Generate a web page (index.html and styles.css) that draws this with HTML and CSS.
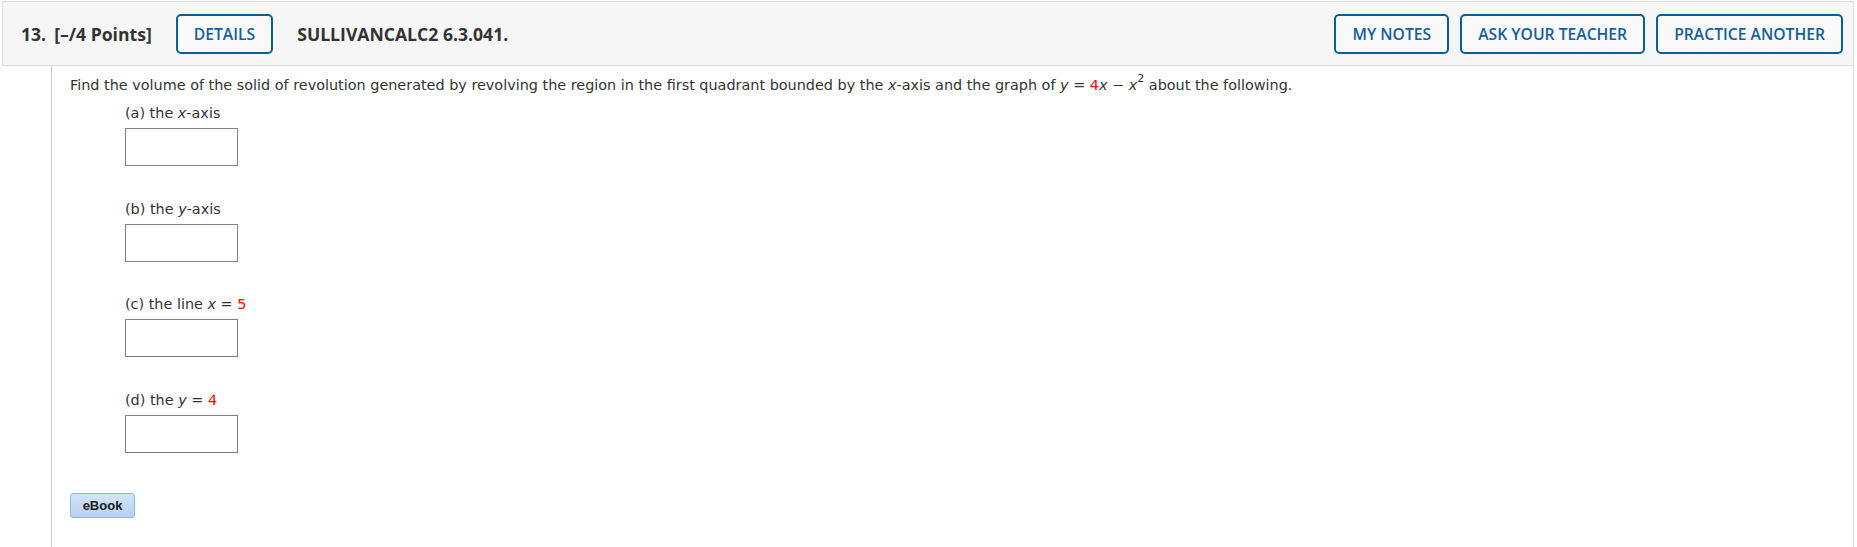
FILE: index.html
```html
<!DOCTYPE html>
<html lang="en">
<head>
<meta charset="utf-8">
<title>Question 13</title>
<link rel="stylesheet" href="styles.css">
</head>
<body>
<div class="page">
  <div class="q-header">
    <div class="q-left">
      <span class="q-num">13.</span>
      <span class="q-points">[–/4 Points]</span>
      <button class="btn">DETAILS</button>
      <span class="q-code">SULLIVANCALC2 6.3.041.</span>
    </div>
    <div class="q-right">
      <button class="btn">MY NOTES</button>
      <button class="btn">ASK YOUR TEACHER</button>
      <button class="btn">PRACTICE ANOTHER</button>
    </div>
  </div>
  <div class="q-body">
    <p class="q-text">Find the volume of the solid of revolution generated by revolving the region in the first quadrant bounded by the <i>x</i>-axis and the graph of <i>y</i> = <span class="red">4</span><i>x</i> − <i>x</i><sup>2</sup> about the following.</p>
    <div class="part">
      <div class="part-label">(a) the <i>x</i>-axis</div>
      <div class="answer"></div>
    </div>
    <div class="part">
      <div class="part-label">(b) the <i>y</i>-axis</div>
      <div class="answer"></div>
    </div>
    <div class="part">
      <div class="part-label">(c) the line <i>x</i> = <span class="red">5</span></div>
      <div class="answer"></div>
    </div>
    <div class="part">
      <div class="part-label">(d) the <i>y</i> = <span class="red">4</span></div>
      <div class="answer"></div>
    </div>
    <button class="ebook">eBook</button>
  </div>
</div>
</body>
</html>
```
FILE: styles.css
```css
html, body {
  margin: 0;
  padding: 0;
  background: #ffffff;
}
.page {
  padding: 1px 3px 0 2px;
}
.q-header {
  height: 63px;
  border: 1px solid #dcdcdc;
  background: #f6f6f6;
  display: flex;
  align-items: center;
  justify-content: space-between;
  padding: 0 10px 0 18px;
  font-family: "Open Sans", "Liberation Sans", sans-serif;
  color: #333333;
}
.q-left, .q-right {
  display: flex;
  align-items: center;
}
.q-num, .q-points, .q-code {
  font-weight: 700;
  font-size: 17.6px;
}
.q-num {
  margin-right: 8px;
}
.q-points {
  margin-right: 24px;
}
.q-code {
  margin-left: 24px;
}
.q-right {
  gap: 11px;
}
.btn {
  height: 40px;
  box-sizing: border-box;
  border: 2px solid #0b5d97;
  border-radius: 5px;
  background: #f9f9f9;
  color: #15609a;
  font-family: "Open Sans", "Liberation Sans", sans-serif;
  font-weight: 600;
  font-size: 15.7px;
  padding: 0 16px;
  cursor: pointer;
}
.q-body {
  margin-left: 49px;
  border-left: 1px solid #cccccc;
  border-right: 1px solid #dddddd;
  padding: 10px 0 40px 18px;
  min-height: 500px;
  font-family: "DejaVu Sans", Verdana, sans-serif;
  font-size: 14.4px;
  color: #333333;
}
.q-text {
  margin: 0;
  line-height: 18px;
}
sup {
  font-size: 11px;
  line-height: 0;
  vertical-align: 8px;
}
.red {
  color: #ff0000;
}
.part {
  margin-left: 55px;
  margin-top: 10px;
}
.part + .part {
  margin-top: 33.5px;
}
.part-label {
  line-height: 18px;
}
.answer {
  margin-top: 6px;
  width: 113px;
  height: 38px;
  box-sizing: border-box;
  border: 1px solid #808080;
  background: #ffffff;
}
.ebook {
  display: block;
  margin-top: 40px;
  width: 65px;
  height: 25px;
  box-sizing: border-box;
  border: 1px solid #91b6df;
  border-radius: 3px;
  background: linear-gradient(#d3e5f9, #b5d1f1);
  font-family: "Liberation Sans", Arial, sans-serif;
  font-weight: 700;
  font-size: 13px;
  color: #1a1a1a;
  padding: 0;
}
```
